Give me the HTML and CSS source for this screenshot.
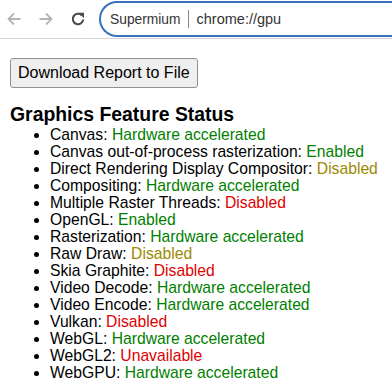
FILE: index.html
```html
<!DOCTYPE html>
<html>
<head>
    <link rel="stylesheet" href="styles.css">
    <title>GPU Internals</title>
</head>
<body>
    <div class="toolbar">
        <span class="nav-btn">
            <svg width="16" height="16" viewBox="0 0 16 16"><path d="M14.5 8H2.5M8 2.5L2.5 8 8 13.5" fill="none" stroke="#b4b4b4" stroke-width="1.8"/></svg>
        </span>
        <span class="nav-btn">
            <svg width="16" height="16" viewBox="0 0 16 16"><path d="M1.5 8h12M8 2.5L13.5 8 8 13.5" fill="none" stroke="#b4b4b4" stroke-width="1.8"/></svg>
        </span>
        <span class="nav-btn">
            <svg width="16" height="16" viewBox="0 0 16 16"><path d="M13.2 8.5a5.2 5.2 0 1 1-1.7-4.4" fill="none" stroke="#4a4a4a" stroke-width="2.1"/><path d="M8.5 1.8h5.5v5.5z" fill="#4a4a4a"/></svg>
        </span>
        <div class="omnibox">
            <span class="brand">Supermium</span>
            <span class="sep"></span>
            <span class="url">chrome://gpu</span>
        </div>
    </div>

    <div class="content">
        <button class="download-btn" type="button">Download Report to File</button>

        <h3 class="title">Graphics Feature Status</h3>
        <ul class="features">
            <li>Canvas: <span class="green">Hardware accelerated</span></li>
            <li>Canvas out-of-process rasterization: <span class="green">Enabled</span></li>
            <li>Direct Rendering Display Compositor: <span class="yellow">Disabled</span></li>
            <li>Compositing: <span class="green">Hardware accelerated</span></li>
            <li>Multiple Raster Threads: <span class="red">Disabled</span></li>
            <li>OpenGL: <span class="green">Enabled</span></li>
            <li>Rasterization: <span class="green">Hardware accelerated</span></li>
            <li>Raw Draw: <span class="yellow">Disabled</span></li>
            <li>Skia Graphite: <span class="red">Disabled</span></li>
            <li>Video Decode: <span class="green">Hardware accelerated</span></li>
            <li>Video Encode: <span class="green">Hardware accelerated</span></li>
            <li>Vulkan: <span class="red">Disabled</span></li>
            <li>WebGL: <span class="green">Hardware accelerated</span></li>
            <li>WebGL2: <span class="red">Unavailable</span></li>
            <li>WebGPU: <span class="green">Hardware accelerated</span></li>
        </ul>
    </div>
</body>
</html>
```

FILE: styles.css
```css
body {
    margin: 0;
    font-family: "Liberation Sans", Arial, sans-serif;
    color: #000;
    background: #fff;
    overflow: hidden;
}

.toolbar {
    display: flex;
    align-items: center;
    height: 38px;
    border-bottom: 1px solid #d6d6d6;
    padding-left: 6px;
}

.nav-btn {
    display: flex;
    align-items: center;
    justify-content: center;
    width: 16px;
    height: 16px;
    margin-right: 16px;
}

.nav-btn:nth-child(3) {
    margin-right: 13px;
}

.omnibox {
    display: flex;
    align-items: center;
    flex: 1;
    height: 32px;
    border: 2px solid #3a72c0;
    border-right: none;
    border-radius: 18px 0 0 18px;
    padding-left: 9px;
    font-size: 13.8px;
    color: #333;
}

.url {
    font-size: 14.5px;
}

.sep {
    width: 1px;
    height: 18px;
    background: #888;
    margin: 0 8px 0 7px;
}

.content {
    padding: 19px 10px 0;
}

.download-btn {
    font-family: "Liberation Sans", Arial, sans-serif;
    font-size: 16px;
    color: #000;
    background: #efefef;
    border: 1px solid #8f8f8f;
    border-radius: 3px;
    padding: 5px 7px;
}

.title {
    font-size: 19.4px;
    margin: 15px 0 0;
}

.features {
    margin: 0;
    padding-left: 40px;
    font-size: 15.7px;
    line-height: 17px;
    white-space: nowrap;
}

.green {
    color: #008000;
}

.red {
    color: #e00000;
}

.yellow {
    color: #9a8a00;
}
```
